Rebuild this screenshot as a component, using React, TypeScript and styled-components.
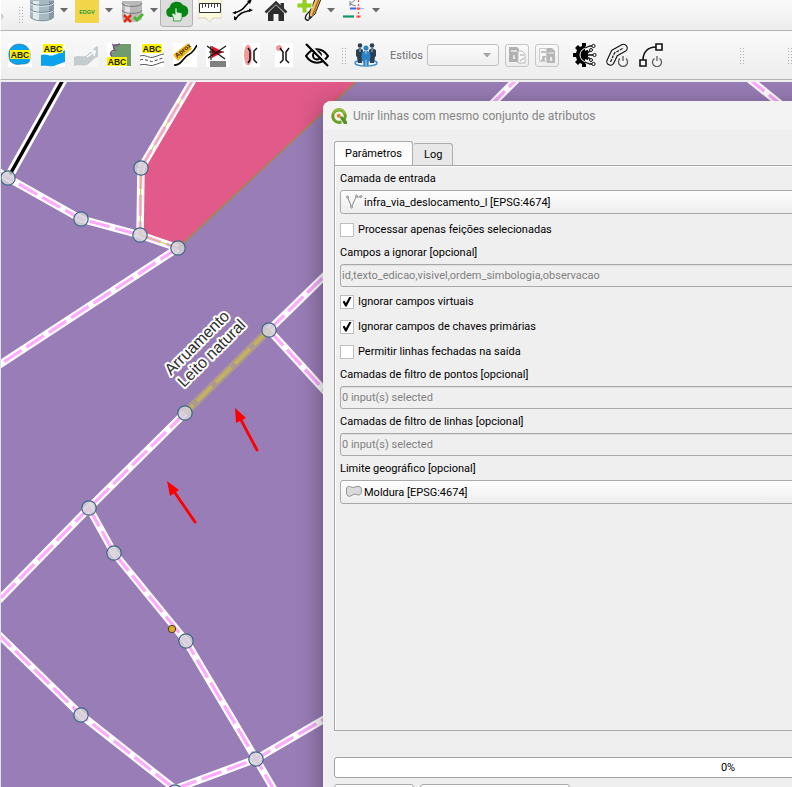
import React, { useState } from "react";
import styled, { createGlobalStyle, css } from "styled-components";

const GlobalStyle = createGlobalStyle`
  * { box-sizing: border-box; }
  html, body { margin: 0; background: #efefef; }
  body, button, input, select { font-family: Roboto, "Noto Sans", sans-serif; font-size: 11px; }
  svg { display: block; }
`;

const Window = styled.main`
  display: flex;
  flex-direction: column;
  height: 100vh;
  overflow: hidden;
`;

const Toolbar = styled.div<{ $top?: boolean }>`
  display: flex;
  flex: none;
  overflow: hidden;
  background: linear-gradient(#fafafa, #ededed);
  border-left: 1px solid #ffffff;
  border-bottom: 1px solid #b4b4b4;
  ${(p) =>
    p.$top
      ? css`
          align-items: flex-end;
          height: 31px;
          padding: 0 0 3px 0;
        `
      : css`
          align-items: center;
          height: 49px;
          padding: 0 0 0 2px;
        `}
`;

const Grip = styled.span<{ $left?: number; $right?: number }>`
  flex: none;
  width: 5px;
  height: 17px;
  margin-left: ${(p) => p.$left ?? 0}px;
  margin-right: ${(p) => p.$right ?? 0}px;
  background: radial-gradient(circle, #b0b0b0 0.8px, transparent 1px) 0 0 / 3px 3px;
`;

const TopGrip = styled(Grip)`
  margin-bottom: 4px;
`;

const Overflow = styled.span`
  width: 4px;
  margin-bottom: 7px;
`;

const ToolButton = styled.button<{ $split?: boolean; $active?: boolean }>`
  display: flex;
  flex: none;
  align-items: center;
  gap: 6px;
  width: ${(p) => (p.$split ? 45 : 33)}px;
  height: 33px;
  padding: 0 0 0 4px;
  border: 1px solid ${(p) => (p.$active ? "#b2b2b2" : "transparent")};
  border-radius: 3px;
  background: ${(p) => (p.$active ? "#dcdcdc" : "transparent")};
`;

const Caret = () => (
  <svg width="8" height="5" viewBox="0 0 8 5" aria-hidden="true">
    <path d="M0 0h8L4 4.6z" fill="#6a6a6a" />
  </svg>
);

const StyleLabel = styled.label`
  flex: none;
  width: 37px;
  margin-left: 8px;
  color: #6e6e74;
`;

const StyleSelectBox = styled.span`
  display: flex;
  flex: none;
  align-items: center;
  width: 72px;
  height: 22px;
  padding-right: 7px;
  margin-right: 6px;
  border: 1px solid #c0c0c0;
  border-radius: 3px;
  background: linear-gradient(#fbfbfb, #eeeeee);
`;

const BareSelect = styled.select`
  appearance: none;
  flex: 1;
  min-width: 0;
  height: 100%;
  padding: 0;
  border: 0;
  color: #000;
  background: transparent;
`;

const SmallButton = styled.button`
  display: flex;
  flex: none;
  align-items: center;
  justify-content: center;
  width: 24px;
  height: 23px;
  margin-right: 6px;
  padding: 0;
  border: 1px solid #c6c6c6;
  border-radius: 3px;
  background: linear-gradient(#fafafa, #ededed);
`;

const ToolGroup = styled.div`
  display: flex;
  margin-left: 3px;
`;

const Spacer = styled.span`
  flex: 1;
`;

const Workspace = styled.section`
  position: relative;
  flex: 1;
  min-height: 0;
  overflow: hidden;
  margin-top: 2px;
  border-left: 1px solid #dfe3e3;
  background: #997db6;
`;

const MapCanvas = styled.svg`
  width: 100%;
  height: 100%;
`;

const Dialog = styled.section`
  position: absolute;
  top: 19px;
  left: 322px;
  right: -341px;
  bottom: -33px;
  display: flex;
  flex-direction: column;
  padding: 0 11px 12px;
  border-radius: 8px;
  background: #efefef;
  box-shadow: 0 6px 26px rgba(0, 0, 0, 0.38);
`;

const TitleBar = styled.header`
  display: flex;
  align-items: center;
  gap: 6px;
  flex: none;
  height: 29px;
  margin: 0 -11px 11px;
  padding-left: 8px;
  border-radius: 8px 8px 0 0;
  background: #f3f3f3;
`;

const Title = styled.h1`
  margin: 0;
  color: #858585;
  font-weight: 400;
  font-size: 12px;
  line-height: 16px;
`;

const Tabs = styled.div`
  display: flex;
  flex: none;
  align-items: flex-end;
  height: 25px;
  margin-bottom: -1px;
`;

const Tab = styled.button<{ $active: boolean }>`
  height: ${(p) => (p.$active ? 25 : 23)}px;
  padding: 0 10px;
  border: 1px solid #acacac;
  border-bottom-color: ${(p) => (p.$active ? "#fff" : "#acacac")};
  border-left-color: ${(p) => (p.$active ? "#acacac" : "transparent")};
  border-radius: 3px 3px 0 0;
  color: #000;
  background: ${(p) => (p.$active ? "linear-gradient(#fafafa, #fff)" : "#e8e8e8")};
`;

const Pane = styled.form`
  display: flex;
  flex: 1;
  flex-direction: column;
  min-height: 0;
  padding: 6px 5px 0;
  border: 1px solid #a8a8a8;
  box-shadow: inset 1px 1px 0 #fbfbfb;
`;

const Field = styled.div<{ $gap?: number }>`
  display: flex;
  flex-direction: column;
  gap: 4px;
  margin-top: ${(p) => p.$gap ?? 0}px;
`;

const FieldLabel = styled.label`
  line-height: 14px;
`;

const Combo = styled.div`
  display: flex;
  align-items: center;
  gap: 1px;
  height: 24px;
  padding-left: 4px;
  border: 1px solid #a9a9a9;
  border-radius: 3px;
  background: linear-gradient(#fefefe, #ededed);
`;

const ReadOnly = styled.input`
  height: 23px;
  padding: 1px 1px;
  border: 1px solid #a9a9a9;
  border-radius: 3px;
  color: #808080;
  background: #efefef;
  box-shadow: inset 0 1px 0 #dedede;
`;

const CheckRow = styled.label<{ $gap: number }>`
  display: flex;
  align-items: center;
  gap: 4px;
  height: 15px;
  margin-top: ${(p) => p.$gap}px;
`;

const CheckBox = styled.input`
  appearance: none;
  display: grid;
  place-items: center;
  width: 14px;
  height: 14px;
  margin: 0;
  border: 1px solid #bebebe;
  background: #fff;
  &:checked::after {
    content: "";
    width: 9px;
    height: 10px;
    background: #000;
    clip-path: polygon(0 50%, 22% 42%, 38% 66%, 78% 0, 100% 6%, 46% 100%, 30% 100%);
  }
`;

const Progress = styled.div`
  display: flex;
  flex: none;
  align-items: center;
  justify-content: center;
  height: 21px;
  margin-top: 26px;
  border: 1px solid #a2a2a2;
  border-radius: 3px;
  background: #fff;
`;

const Actions = styled.div`
  display: flex;
  gap: 6px;
  margin-top: 6px;
`;

const ActionButton = styled.button<{ $wide?: boolean }>`
  width: ${(p) => (p.$wide ? 150 : 80)}px;
  height: 24px;
  border: 1px solid #a9a9a9;
  border-radius: 3px;
  background: linear-gradient(#fefefe, #ededed);
`;

const Icon = ({ children }: { children: React.ReactNode }) => (
  <svg width="24" height="24" viewBox="0 0 24 24" fill="none" aria-hidden="true">
    {children}
  </svg>
);

const Abc = ({ x, y }: { x: number; y: number }) => (
  <>
    <rect x={x - 1} y={y} width="20" height="9" fill="#fff200" />
    <text x={x + 9} y={y + 8} textAnchor="middle" fontFamily="Liberation Sans, sans-serif" fontWeight="700" fontSize="8.5" fill="#222">
      ABC
    </text>
  </>
);

const Database = () => (
  <>
    <path d="M0 1v16c0 2.600 5 5 12 5s12-2.400 12-5V1z" fill="#a9b9c2" />
    <path d="M3 2v18c2 1 4 1.500 6 1.700V2z" fill="#dfe9ed" />
    <path d="M19 2v18.500c3-.9 5-1.900 5-3.500V2z" fill="#8798a3" />
    <path d="M0 2.500c0 5 24 5 24 0M0 9.500c0 5 24 5 24 0" stroke="#6f838e" strokeWidth="1" />
    <path d="M0 3.600c0 5 24 5 24 0M0 10.600c0 5 24 5 24 0" stroke="#e6eff3" strokeWidth=".8" />
    <path d="M0 16.500c0 7 24 7 24 0" stroke="#7f929c" strokeWidth="1" />
  </>
);

const topTools: { name: string; split?: boolean; active?: boolean; art: React.ReactNode }[] = [
  { name: "Banco de dados", split: true, art: <Database /> },
  {
    name: "EDGV",
    split: true,
    art: (
      <>
        <path d="M0 0h24v24H0z" fill="#f2d548" />
        <text x="12" y="14.500" textAnchor="middle" fontFamily="Liberation Sans, sans-serif" fontWeight="700" fontSize="5.500" fill="#20a03e">EDGV</text>
      </>
    ),
  },
  {
    name: "Validar banco",
    split: true,
    art: (
      <>
        <path d="M2 2v17c0 2.300 4 4 10 4s10-1.700 10-4V2z" fill="#b9b9b9" />
        <path d="M5 5v17l5 1V6z" fill="#e2e2e2" />
        <path d="M2 4c0 4.500 20 4.500 20 0M2 11c0 4.500 20 4.500 20 0" stroke="#777" />
        <path d="M4 16l7 7M11 16l-7 7" stroke="#e32b14" strokeWidth="2.600" />
        <path d="M14 18l3 3 6-6" stroke="#44b92b" strokeWidth="2.800" />
      </>
    ),
  },
  {
    name: "Nuvem",
    active: true,
    art: (
      <>
        <path d="M5 18a5 5 0 0 1-.5-9.500A7.500 7.500 0 0 1 18 6a6.200 6.200 0 0 1 1 12z" fill="#078512" />
        <path d="M8.500 22v-3L6.500 15l2-1 1.500 1.500V9h2v4l5 1v5l-1.500 3z" fill="#dcebdc" stroke="#078512" strokeWidth=".7" />
      </>
    ),
  },
  {
    name: "Medir",
    art: (
      <>
        <path d="M0 0h24v19h-9l-3.500 4L8 19H0z" fill="#fbfbdc" stroke="#c9c9af" strokeWidth=".8" />
        <path d="M1.500 4.500h21v9h-21z" fill="#fff" stroke="#333" />
        <path d="M4.500 5v4M7.500 5v3M10.500 5v4M13.500 5v3M16.500 5v4M19.500 5v3" stroke="#444" />
      </>
    ),
  },
  {
    name: "Generalizar",
    art: (
      <>
        <path d="M3 14C12 12 13 8 18 3M4 21c5-8 9-8 15-9.500" stroke="#000" strokeWidth="1.500" />
        <path d="M21 0l-2 5-3-3zM1 14l4-2v3zM3 21l0-4 3 2zM18 9.500l4 1.500-4 2z" fill="#000" />
      </>
    ),
  },
  {
    name: "Início",
    art: (
      <>
        <path d="M1.500 13.500L12 3.500l10.500 10" stroke="#333" strokeWidth="2.600" />
        <path d="M4 14l8-8 8 8v8h-5.500v-7h-5v7H4z" fill="#2c2c2c" />
        <path d="M16.500 4H20v6l-3.500-3z" fill="#333" />
      </>
    ),
  },
  {
    name: "Adicionar feição",
    split: true,
    art: (
      <>
        <path d="M12 21c-5 1-5-4 1-9" stroke="#222" strokeWidth="1.500" />
        <path d="M12 20l1-8 6-14 5 2-6 15z" fill="#eebf5c" stroke="#222" />
        <path d="M15.500 16L22 0" stroke="#b46a21" strokeWidth="1.500" />
        <path d="M12 21l.5-4 3 1z" fill="#222" />
        <path d="M0 4h5v-6h5v6h5v5h-5v5H5V9H0z" fill="#93cf25" stroke="#fff" strokeWidth=".8" />
      </>
    ),
  },
  {
    name: "Aderência",
    split: true,
    art: (
      <>
        <path d="M1 17.500h11" stroke="#109767" strokeWidth="2.200" />
        <path d="M16.500 1v20" stroke="#fb4b42" strokeWidth="1.200" strokeDasharray="2 2" />
        <path d="M14.500 17.500h4M14.500 9.500h4" stroke="#fb4b42" strokeWidth="2" />
        <path d="M8 9.500h6" stroke="#376bf0" strokeWidth="2" />
        <path d="M18 9.500h4" stroke="#9db9f8" strokeWidth="1" />
        <path d="M8 2v5M13 1L8 5l6 2" stroke="#7d8289" />
      </>
    ),
  },
];

const labelTools: { name: string; art: React.ReactNode }[] = [
  {
    name: "Rótulo em área",
    art: (
      <>
        <path d="M0 0h24v24H0z" fill="#fff" />
        <path d="M2 18C-2 6 5 1 11 1c8 0 12 6 11 13 0 6-2 7-8 7-6 1-9 0-12-3z" fill="#0aa2ec" stroke="#256d93" strokeWidth=".6" />
        <Abc x={3} y={7} />
      </>
    ),
  },
  {
    name: "Rótulo de rio",
    art: (
      <>
        <path d="M0 0h24v24H0z" fill="#fff" />
        <path d="M0 12c6-2 8 2 13 0 4-1 8-3 11-5v12c-3 1-7 2-11 4-4 1-8-1-13 0z" fill="#0aa2ec" />
        <Abc x={3} y={1} />
      </>
    ),
  },
  {
    name: "Seta de rio",
    art: (
      <>
        <path d="M0 0h24v24H0z" fill="#f6f6f6" />
        <path d="M0 14c6-3 9 2 14-3 4-4 7-7 10-8v11c-5 1-6 5-11 8-4 2-8-1-13 1z" fill="#c5ccd0" />
        <path d="M13 14l7-5M16 8h5l-1 5" stroke="#fff" strokeWidth="1.500" />
      </>
    ),
  },
  {
    name: "Rótulo de vegetação",
    art: (
      <>
        <path d="M0 0h24v24H0z" fill="#fff" />
        <path d="M7 1h17v22H12l-2-7-6-2-1-4 4-2-1-4z" fill="#709b70" />
        <path d="M5 1c3 1 0 4 3 6-4 0-6 4-3 6M7 2c2 2 4-1 6-1" stroke="#7c4b85" strokeWidth="1.300" />
        <Abc x={1} y={14} />
      </>
    ),
  },
  {
    name: "Rótulo de via",
    art: (
      <>
        <path d="M0 0h24v24H0z" fill="#fff" />
        <path d="M0 13c6-2 9 3 14 1 4-1 7-3 10-3M0 22c6-2 10 2 14 0 4-1 7-3 10-3" stroke="#555" strokeWidth="1" />
        <path d="M0 17c6-2 10 3 14 1 4-1 7-3 10-3" stroke="#444" strokeDasharray="3 2" />
        <Abc x={3} y={1} />
      </>
    ),
  },
  {
    name: "Rótulo aproximado",
    art: (
      <>
        <path d="M0 0h24v24H0z" fill="#fff" />
        <path d="M0 12L15 0l4 6L5 18z" fill="#f5bb1c" />
        <path d="M1 22c7 1 9-7 14-10 4-2 7-6 9-10" stroke="#000" strokeWidth="1.600" />
        <text transform="translate(4 15) rotate(-39)" fontFamily="Liberation Sans, sans-serif" fontWeight="700" fontSize="6.500" fill="#3a2600">Aprox</text>
      </>
    ),
  },
  {
    name: "Excluir bandeira",
    art: (
      <>
        <path d="M0 0h24v24H0z" fill="#fff" />
        <path d="M4 18h16v6H4z" fill="#808080" />
        <path d="M6 3l11 6-11 6z" fill="#f00d22" />
        <path d="M5 3v14M1 3l18 13M2 15L20 3M3 9h15" stroke="#111" strokeWidth="1.200" />
      </>
    ),
  },
  {
    name: "Ponte em área",
    art: (
      <>
        <path d="M4 0h17v24H4z" fill="#fff" />
        <ellipse cx="9" cy="12" rx="4" ry="10.500" fill="#f49999" />
        <path d="M9 5l2 3v9l-2 3M18 5l-3 3v9l3 3" stroke="#111" strokeWidth="1.500" />
      </>
    ),
  },
  {
    name: "Ponte em ponto",
    art: (
      <>
        <path d="M3 0h18v24H3z" fill="#fff" />
        <circle cx="7" cy="5" r="3" fill="#f49999" />
        <path d="M8 5l3 4v8l-3 3M17 5l-3 4v8l3 3" stroke="#111" strokeWidth="1.500" />
      </>
    ),
  },
  {
    name: "Ocultar",
    art: (
      <>
        <path d="M1 13C7 4 17 4 23 13C17 22 7 22 1 13z" stroke="#000" strokeWidth="2.200" />
        <circle cx="12" cy="12.500" r="4" stroke="#000" strokeWidth="2" />
        <path d="M3 0l21 22" stroke="#f5f5f5" strokeWidth="2" />
        <path d="M1 1l22 22" stroke="#000" strokeWidth="2.200" />
      </>
    ),
  },
];

const vectorTools: { name: string; art: React.ReactNode }[] = [
  {
    name: "Processamento",
    art: (
      <>
        <path d="M9 0h4v3l-1 1v16l1 1v3H9v-3l-2-1-2 2-3-3 2-2-1-3H0v-4h3l1-3-2-2 3-3 2 2 2-1z" fill="#000" />
        <path d="M14 5a7 7 0 1 0 0 14" stroke="#fff" strokeWidth="1" />
        <path d="M15 7a5 5 0 1 0 0 10z" fill="#000" />
        <path d="M12 12h8M13 9h3l1-2M13 15h3l1 2M12 5l5-2h2M12 19l5 2h2" stroke="#111" strokeWidth="1.300" />
        <g fill="#f4f4f4" stroke="#111">
          <circle cx="20.500" cy="3" r="1.600" /><circle cx="18" cy="7" r="1.500" /><circle cx="21.500" cy="12" r="1.600" /><circle cx="18" cy="17" r="1.500" /><circle cx="20.500" cy="21" r="1.600" />
        </g>
      </>
    ),
  },
  {
    name: "Traçado",
    art: (
      <>
        <path d="M4.500 18.500l4-8.500 9-5" stroke="#111" strokeWidth="8.500" strokeLinecap="round" strokeLinejoin="round" />
        <path d="M4.500 18.500l4-8.500 9-5" stroke="#f5f5f5" strokeWidth="6.200" strokeLinecap="round" strokeLinejoin="round" />
        <path d="M4.500 19l4-9 9-5" stroke="#222" strokeWidth="1.300" strokeDasharray="3 1" />
        <circle cx="17" cy="18" r="5" fill="#f5f5f5" />
        <path d="M14 15.500a4.500 4.500 0 1 0 6 0M17 13v5" stroke="#555" strokeWidth="1.300" />
      </>
    ),
  },
  {
    name: "Curva",
    art: (
      <>
        <path d="M4 17C4 9 9 4 17 4" stroke="#111" strokeWidth="1.600" />
        <path d="M1 17h6v6H1zM17 1h6v6h-6z" fill="#fff" stroke="#111" strokeWidth="1.600" />
        <path d="M15.500 15.500a4.500 4.500 0 1 0 5 0M18 13v5" stroke="#555" strokeWidth="1.200" />
      </>
    ),
  },
];

const People = () => (
  <Icon>
    <ellipse cx="12" cy="20" rx="11" ry="3" stroke="#3890d0" strokeWidth="1.500" />
    <g fill="#2b3f55">
      <circle cx="6" cy="2.500" r="2.300" /><circle cx="18" cy="2.500" r="2.300" />
      <path d="M2 7l4-2 3 2v6l-1 7H4l-1-6-1-1zM22 7l-4-2-3 2v6l1 7h4l1-6 1-1z" />
    </g>
    <circle cx="12" cy="5" r="2.600" fill="#2a83c5" />
    <path d="M8 9l3-1h2l3 1 .5 6-1.500 1-.5 7h-5L9 16l-1.500-1z" fill="#2a83c5" />
    <path d="M12 8v3M12 17v6M6 6v3M18 6v3" stroke="#d9ecf9" strokeWidth=".8" />
  </Icon>
);

const Pages = () => (
  <svg width="18" height="18" viewBox="0 0 18 18" aria-hidden="true">
    <path d="M1 1h8l2 2v13H1z" fill="#b1b1b1" />
    <path d="M10 5h4l3 3v9h-7z" fill="#fafafa" stroke="#bcbcbc" />
    <path d="M3 5h6M5 12h2M6 9v4" stroke="#ededed" strokeWidth="1.500" />
    <path d="M12 9h4M12 15l4-3" stroke="#c0c0c0" strokeWidth="1.500" />
  </svg>
);

const PastePages = () => (
  <svg width="18" height="18" viewBox="0 0 18 18" aria-hidden="true">
    <path d="M1.500 2.500h7v13h-7z" fill="#f6f6f6" stroke="#cccccc" />
    <path d="M9 2h5l3 3v12H9z" fill="#b5b5b5" />
    <path d="M3 6h5M4 11h3l-3 3h3" fill="none" stroke="#b0b0b0" strokeWidth="1.400" />
    <path d="M10 7h6M12 15l1-4 1 4" fill="none" stroke="#efefef" strokeWidth="1.200" />
  </svg>
);

const roads = [
  "M-4 170L8 178L81 219L140 235L178 248",
  "M141 168L194 78",
  "M141 168L140 235",
  "M178 248L-4 367",
  "M269 330L345 256",
  "M269 330L345 413",
  "M185 413L89 508L-4 603",
  "M89 508L114 553L186 641L256 759L280 800",
  "M-4 632L81 715L175 789L256 759L345 707",
  "M490 106L518 78",
  "M748 78L784 107",
];

const nodes = [
  [8, 178], [81, 219], [140, 235], [141, 168], [178, 248], [269, 330], [185, 413],
  [89, 508], [114, 553], [186, 641], [81, 715], [256, 759], [175, 792],
];

const MapView = () => (
  <MapCanvas viewBox="1 82 791 705" preserveAspectRatio="xMinYMin slice" role="img" aria-label="Mapa">
    <path d="M194 78L141 168L140 235L178 248L360 78z" fill="#e15a89" />
    <path d="M8 178L64 78" stroke="#fff" strokeWidth="9" />
    <path d="M8 178L64 78" stroke="#000" strokeWidth="3.500" />
    <g fill="none" strokeLinejoin="round">
      {roads.map((d) => <path key={d} d={d} stroke="#fff" strokeWidth="7.500" />)}
      {roads.map((d) => <path key={d} d={d} stroke="#ffaaff" strokeWidth="3.200" strokeDasharray="21 5.700" />)}
      <path d="M194 78L141 168L140 235L178 248" stroke="#c8c545" strokeWidth="1" />
      <path d="M178 248L360 78" stroke="#9a9138" strokeWidth="1.200" />
      <path d="M269 330L185 413" stroke="#ae998e" strokeWidth="8" />
      <path d="M269 330L185 413" stroke="#c4b25f" strokeWidth="3.500" strokeDasharray="21 5.700" />
    </g>
    {nodes.map(([x, y]) => (
      <circle key={`${x}-${y}`} cx={x} cy={y} r="7.200" fill="#d4d2d8" fillOpacity=".84" stroke="#3a6882" strokeWidth="1.200" />
    ))}
    <circle cx="172" cy="629" r="3.700" fill="#d7ac2c" stroke="#4c3a25" />
    <g fontFamily="Liberation Sans, sans-serif" fontSize="16" fill="#2d2d2d" stroke="#fff" strokeWidth="4" strokeLinejoin="round" paintOrder="stroke">
      <text transform="translate(171 376) rotate(-44.700)">Arruamento</text>
      <text transform="translate(184 388) rotate(-44.700)">Leito natural</text>
    </g>
    <g stroke="#ff0000" strokeWidth="2.800" strokeLinecap="round">
      <path d="M257 450L240 418M195 522L173 490" />
    </g>
    <path d="M235 408L246 418L236 423zM167 481L179 490L170 496z" fill="#ff0000" />
  </MapCanvas>
);

const QgisLogo = () => (
  <svg width="16" height="16" viewBox="0 0 16 16" fill="none" aria-hidden="true">
    <path d="M13.200 11.500A6.200 6.200 0 1 0 10.500 13.800" stroke="#6a9e25" strokeWidth="3" />
    <path d="M2 6A6.200 6.200 0 0 1 14 6" stroke="#94b83a" strokeWidth="2.200" />
    <path d="M8 8.500h3.500l4.500 5V16h-3z" fill="#579323" />
    <circle cx="7.700" cy="7.700" r="2" fill="#ee7d25" />
  </svg>
);

const LineGlyph = () => (
  <svg width="18" height="16" viewBox="0 0 18 16" fill="none" stroke="#8b8b8b" aria-hidden="true">
    <path d="M2.500 3l4 10L11 3h5" />
    <g fill="#f6f6f6">
      <circle cx="2.500" cy="3" r="1" /><circle cx="6.500" cy="13" r="1" /><circle cx="11.500" cy="2" r="1" /><circle cx="16" cy="2.500" r="1" />
    </g>
  </svg>
);

const PolygonGlyph = () => (
  <svg width="18" height="16" viewBox="0 0 18 16" aria-hidden="true">
    <path d="M1.500 5C1.500 2 4 2 6 3c2 1 4 0 6-.5 3-.7 4.500 1 4.500 3.500 0 3-.5 5-3 5-2 0-2.500-1.500-5-.5-2 1-4 2.500-5.500 1.500C1 10.500 1.500 8 1.500 5z" fill="#dadada" stroke="#929292" />
  </svg>
);

export default function App() {
  const [tab, setTab] = useState("Parâmetros");
  return (
    <Window>
      <GlobalStyle />
      <Toolbar $top role="toolbar" aria-label="Ferramentas">
        <Overflow>
          <svg width="4" height="7" viewBox="0 0 4 7"><path d="M0 0l3 3.500L0 7z" fill="#ccc" /></svg>
        </Overflow>
        <TopGrip $left={13} $right={2} />
        {topTools.map((t) => (
          <ToolButton key={t.name} type="button" aria-label={t.name} $split={t.split} $active={t.active}>
            <Icon>{t.art}</Icon>
            {t.split && <Caret />}
          </ToolButton>
        ))}
      </Toolbar>
      <Toolbar role="toolbar" aria-label="Rótulos e estilos">
        {labelTools.map((t) => (
          <ToolButton key={t.name} type="button" aria-label={t.name}>
            <Icon>{t.art}</Icon>
          </ToolButton>
        ))}
        <Grip $left={8} $right={3} />
        <ToolButton type="button" aria-label="Usuários"><People /></ToolButton>
        <StyleLabel htmlFor="estilos">Estilos</StyleLabel>
        <StyleSelectBox>
          <BareSelect id="estilos"><option value="" /></BareSelect>
          <svg width="8" height="5" viewBox="0 0 8 5" aria-hidden="true"><path d="M0 0h8L4 4.600z" fill="#a5a5a5" /></svg>
        </StyleSelectBox>
        <SmallButton type="button" aria-label="Copiar estilo"><Pages /></SmallButton>
        <SmallButton type="button" aria-label="Colar estilo"><PastePages /></SmallButton>
        <ToolGroup>
          {vectorTools.map((t) => (
            <ToolButton key={t.name} type="button" aria-label={t.name}>
              <Icon>{t.art}</Icon>
            </ToolButton>
          ))}
        </ToolGroup>
        <Spacer />
        <Grip $right={43} />
        <Grip />
      </Toolbar>
      <Workspace>
        <MapView />
        <Dialog role="dialog" aria-labelledby="dialog-title">
          <TitleBar>
            <QgisLogo />
            <Title id="dialog-title">Unir linhas com mesmo conjunto de atributos</Title>
          </TitleBar>
          <Tabs role="tablist">
            {["Parâmetros", "Log"].map((name) => (
              <Tab key={name} type="button" role="tab" aria-selected={tab === name} $active={tab === name} onClick={() => setTab(name)}>
                {name}
              </Tab>
            ))}
          </Tabs>
          <Pane>
            <Field>
              <FieldLabel htmlFor="entrada">Camada de entrada</FieldLabel>
              <Combo>
                <LineGlyph />
                <BareSelect id="entrada"><option>infra_via_deslocamento_l [EPSG:4674]</option></BareSelect>
              </Combo>
            </Field>
            <CheckRow $gap={8}><CheckBox type="checkbox" />Processar apenas feições selecionadas</CheckRow>
            <Field $gap={9}>
              <FieldLabel htmlFor="campos">Campos a ignorar [opcional]</FieldLabel>
              <ReadOnly id="campos" readOnly value="id,texto_edicao,visivel,ordem_simbologia,observacao" />
            </Field>
            <CheckRow $gap={7}><CheckBox type="checkbox" defaultChecked />Ignorar campos virtuais</CheckRow>
            <CheckRow $gap={10}><CheckBox type="checkbox" defaultChecked />Ignorar campos de chaves primárias</CheckRow>
            <CheckRow $gap={10}><CheckBox type="checkbox" />Permitir linhas fechadas na saída</CheckRow>
            <Field $gap={9}>
              <FieldLabel htmlFor="pontos">Camadas de filtro de pontos [opcional]</FieldLabel>
              <ReadOnly id="pontos" readOnly value="0 input(s) selected" />
            </Field>
            <Field $gap={6}>
              <FieldLabel htmlFor="linhas">Camadas de filtro de linhas [opcional]</FieldLabel>
              <ReadOnly id="linhas" readOnly value="0 input(s) selected" />
            </Field>
            <Field $gap={6}>
              <FieldLabel htmlFor="limite">Limite geográfico [opcional]</FieldLabel>
              <Combo>
                <PolygonGlyph />
                <BareSelect id="limite"><option>Moldura [EPSG:4674]</option></BareSelect>
              </Combo>
            </Field>
          </Pane>
          <Progress role="progressbar" aria-valuenow={0} aria-valuemin={0} aria-valuemax={100}>0%</Progress>
          <Actions>
            <ActionButton type="button" aria-label="Avançado" />
            <ActionButton type="button" aria-label="Executar em lote" $wide />
          </Actions>
        </Dialog>
      </Workspace>
    </Window>
  );
}
